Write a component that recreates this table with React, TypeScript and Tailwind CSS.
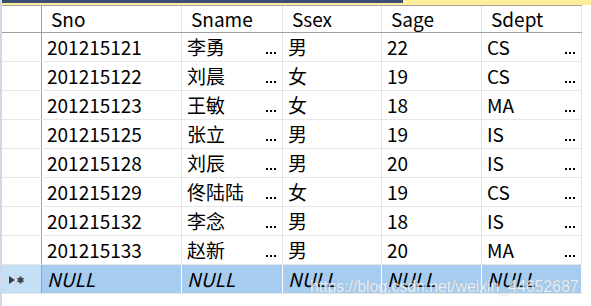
const COLUMNS = [
  { name: "Sno", width: "w-[140px]", more: false },
  { name: "Sname", width: "w-[101px]", more: true },
  { name: "Ssex", width: "w-[99px]", more: false },
  { name: "Sage", width: "w-[100px]", more: false },
  { name: "Sdept", width: "w-[100px]", more: true },
];

const ROWS = [
  ["201215121", "李勇", "男", "22", "CS"],
  ["201215122", "刘晨", "女", "19", "CS"],
  ["201215123", "王敏", "女", "18", "MA"],
  ["201215125", "张立", "男", "19", "IS"],
  ["201215128", "刘辰", "男", "20", "IS"],
  ["201215129", "佟陆陆", "女", "19", "CS"],
  ["201215132", "李念", "男", "18", "IS"],
  ["201215133", "赵新", "男", "20", "MA"],
];

const Dots = () => (
  <span className="mt-[12px] flex gap-[2px]">
    <span className="h-[2px] w-[2px] bg-black" />
    <span className="h-[2px] w-[2px] bg-black" />
    <span className="h-[2px] w-[2px] bg-black" />
  </span>
);

const App = () => {
  return (
    <div
      className="relative flex h-[306px] w-[591px] overflow-hidden bg-white text-[19px] leading-none text-black"
      style={{ fontFamily: '"Noto Sans CJK SC", "Noto Sans", sans-serif' }}
    >
      <div className="w-[2px] shrink-0 bg-[#d3d8e8]" />
      <div className="flex flex-1 flex-col">
        <div className="relative h-[5px] bg-[#fdee9c]">
          <div className="h-[3px] w-[401px] bg-[#3c4f72]" />
        </div>
        <div className="flex h-[28px] w-[580px] border-t border-b border-t-[#a3a3a3] border-b-[#a0a0a0]">
          <div className="w-[40px] border-r border-[#a0a0a0]" />
          {COLUMNS.map((col) => (
            <div
              key={col.name}
              className={`${col.width} flex items-center border-r border-[#e3e3e3] pl-[9px] pb-[2px]`}
            >
              {col.name}
            </div>
          ))}
        </div>
        {ROWS.map((row) => (
          <div key={row[0]} className="flex h-[29px] w-[580px] border-b border-[#e6e6e6]">
            <div className="w-[40px] border-r border-[#a0a0a0]" />
            {COLUMNS.map((col, i) => (
              <div
                key={col.name}
                className={`${col.width} flex items-center justify-between border-r border-[#e3e3e3] pl-[5px] pr-[6px] pb-[1px]`}
              >
                <span>{row[i]}</span>
                {col.more && <Dots />}
              </div>
            ))}
          </div>
        ))}
        <div className="flex h-[29px] w-[580px] border-b border-[#e6e6e6]">
          <div className="flex w-[40px] items-center border-r border-[#a0a0a0] bg-[#c5dff5] pl-[6px] pt-[2px]">
            <svg width="18" height="10" viewBox="0 0 18 10">
              <path d="M1 1 L7 5 L1 9 Z" fill="#3b3b3b" />
              <path
                d="M12.5 1.5 V8.5 M9.5 3.2 L15.5 6.8 M9.5 6.8 L15.5 3.2"
                stroke="#3b3b3b"
                strokeWidth="1.8"
              />
            </svg>
          </div>
          {COLUMNS.map((col) => (
            <div
              key={col.name}
              className={`${col.width} flex items-center border-r border-white bg-[#a6cdf0] pl-[5px] pb-[1px] italic`}
            >
              NULL
            </div>
          ))}
        </div>
      </div>
      <div
        className="pointer-events-none absolute left-[310px] top-[279px] text-[16px] tracking-[-0.1px] whitespace-nowrap text-white/80"
        style={{ fontFamily: '"Liberation Sans", Arial, sans-serif', textShadow: "0 0 1px rgba(120,120,120,0.5)" }}
      >
        https://blog.csdn.net/weixin_44652687
      </div>
    </div>
  );
};

export default App;
